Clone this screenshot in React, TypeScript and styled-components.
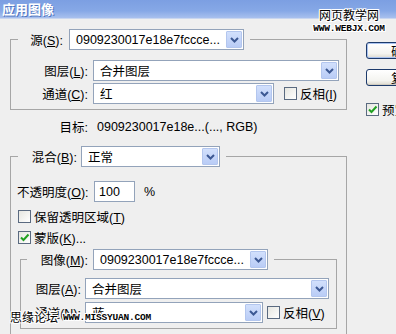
import React from 'react';
import styled, { createGlobalStyle } from 'styled-components';

const GlobalStyle = createGlobalStyle`
  body {
    margin: 0;
    background: #efefef;
  }
  * {
    box-sizing: border-box;
  }
`;

const Chevron = () => (
  <svg width="9" height="6" viewBox="0 0 9 6">
    <path d="M1 1 L4.5 4.5 L8 1" fill="none" stroke="#3c5893" strokeWidth="2" />
  </svg>
);

const Tick = () => (
  <svg width="11" height="11" viewBox="0 0 11 11">
    <path d="M2 5.5 L4.5 8 L9.5 2.5" fill="none" stroke="#21a121" strokeWidth="2" />
  </svg>
);

const Select = ({ w, value }: { w: number; value: string }) => (
  <SelectBox $w={w}>
    <SelectText>{value}</SelectText>
    <ArrowBtn>
      <Chevron />
    </ArrowBtn>
  </SelectBox>
);

const Check = ({ on, ml = 0, children }: { on?: boolean; ml?: number; children: React.ReactNode }) => (
  <CheckWrap $ml={ml}>
    <Box>{on && <Tick />}</Box>
    <span>{children}</span>
  </CheckWrap>
);

const App = () => {
  return (
    <Window>
      <GlobalStyle />
      <TitleBar>应用图像</TitleBar>
      <Body>
        <LeftCol>
          <Group $pt={10} $pb={5}>
            <Legend $ml={7}>
              <Label $w={45}>源(<U>S</U>):</Label>
              <Gap $w={6} />
              <Select w={175} value="0909230017e18e7fccce..." />
            </Legend>
            <Row>
              <Label $w={77}>图层(<U>L</U>):</Label>
              <Gap $w={5} />
              <Select w={246} value="合并图层" />
            </Row>
            <Row $mt={2}>
              <Label $w={77}>通道(<U>C</U>):</Label>
              <Gap $w={5} />
              <Select w={181} value="红" />
              <Check ml={10}>反相(<U>I</U>)</Check>
            </Row>
          </Group>

          <Target>
            <Label $w={78}>目标:</Label>
            <Gap $w={9} />
            <span>0909230017e18e...(..., RGB)</span>
          </Target>

          <Group $pt={14} $pb={20} $mt={12}>
            <Legend $ml={7}>
              <Label $w={59}>混合(<U>B</U>):</Label>
              <Gap $w={4} />
              <Select w={139} value="正常" />
            </Legend>
            <Row $pl={6}>
              <Label $w={77} $left>不透明度(<U>O</U>):</Label>
              <NumInput>100</NumInput>
              <Gap $w={9} />
              <span>%</span>
            </Row>
            <CheckRow $mt={4}>
              <Check>保留透明区域(<U>T</U>)</Check>
            </CheckRow>
            <CheckRow>
              <Check on>蒙版(<U>K</U>)...</Check>
            </CheckRow>
            <Group $pt={8} $pb={5} $mt={1} $mx={9}>
              <Legend $ml={6}>
                <Label $w={61}>图像(<U>M</U>):</Label>
                <Gap $w={5} />
                <Select w={175} value="0909230017e18e7fccce..." />
              </Legend>
              <Row>
                <Label $w={60}>图层(<U>A</U>):</Label>
                <Gap $w={4} />
                <Select w={244} value="合并图层" />
              </Row>
              <Row $mt={3}>
                <Label $w={60}>通道(<U>N</U>):</Label>
                <Gap $w={4} />
                <Select w={178} value="蓝" />
                <Check ml={4}>反相(<U>V</U>)</Check>
              </Row>
            </Group>
          </Group>
        </LeftCol>

        <RightCol>
          <Button $primary>确定</Button>
          <Button>复位</Button>
          <PreviewRow>
            <Check on>预览(<U>P</U>)</Check>
          </PreviewRow>
        </RightCol>
      </Body>

      <MarkTop>
        <MarkTitle>网页教学网</MarkTitle>
        <MarkUrl>WWW.WEBJX.COM</MarkUrl>
      </MarkTop>
      <MarkBottom>
        <MarkTitle>思缘论坛</MarkTitle>
        <MarkUrl>WWW.MISSYUAN.COM</MarkUrl>
      </MarkBottom>
    </Window>
  );
};

export default App;

const Window = styled.div`
  width: 396px;
  height: 334px;
  position: relative;
  overflow: hidden;
  background: #efefef;
  font-family: "Liberation Sans", "Noto Sans CJK SC", sans-serif;
  font-size: 12.5px;
  color: #000;
`;

const TitleBar = styled.div`
  height: 19px;
  padding-left: 2px;
  line-height: 18px;
  background: linear-gradient(#7c9fe2, #86a8e6 60%, #a8c0ee);
  border-bottom: 1px solid #c9d6ef;
  color: #fff;
  font-family: "Noto Sans CJK SC", sans-serif;
  font-weight: bold;
  font-size: 13px;
  text-shadow: 1px 1px 0 #5277bf;
`;

const Body = styled.div`
  display: flex;
  gap: 19px;
  padding: 10px 0 0 10px;
`;

const LeftCol = styled.div`
  flex: none;
  width: 337px;
  display: flex;
  flex-direction: column;
`;

const Group = styled.fieldset<{ $pt: number; $pb: number; $mt?: number; $mx?: number }>`
  margin: ${({ $mt }) => $mt || 0}px ${({ $mx }) => $mx || 0}px 0;
  padding: ${({ $pt }) => $pt}px 0 ${({ $pb }) => $pb}px;
  border: 1px solid #a6a6a6;
  min-width: 0;
  display: flex;
  flex-direction: column;
`;

const Legend = styled.legend<{ $ml: number }>`
  margin-left: ${({ $ml }) => $ml}px;
  padding: 0 6px 0 0;
  display: flex;
  align-items: center;
`;

const Row = styled.div<{ $mt?: number; $pl?: number }>`
  display: flex;
  align-items: center;
  height: 21px;
  margin-top: ${({ $mt }) => $mt || 0}px;
  padding-left: ${({ $pl }) => $pl || 0}px;
`;

const CheckRow = styled.div<{ $mt?: number }>`
  display: flex;
  align-items: center;
  height: 21px;
  margin-top: ${({ $mt }) => $mt || 0}px;
  padding-left: 7px;
`;

const Target = styled.div`
  display: flex;
  align-items: center;
  height: 15px;
  margin-top: 9px;
`;

const Label = styled.span<{ $w: number; $left?: boolean }>`
  flex: none;
  width: ${({ $w }) => $w}px;
  text-align: ${({ $left }) => ($left ? 'left' : 'right')};
  white-space: nowrap;
`;

const Gap = styled.span<{ $w: number }>`
  flex: none;
  width: ${({ $w }) => $w}px;
`;

const U = styled.span`
  text-decoration: underline;
`;

const SelectBox = styled.div<{ $w: number }>`
  flex: none;
  width: ${({ $w }) => $w}px;
  height: 21px;
  display: flex;
  align-items: center;
  background: #fff;
  border: 1px solid #93a3ba;
`;

const SelectText = styled.span`
  flex: 1;
  padding-left: 6px;
  white-space: nowrap;
  overflow: hidden;
`;

const ArrowBtn = styled.div`
  flex: none;
  width: 16px;
  height: 17px;
  margin-right: 1px;
  display: flex;
  align-items: center;
  justify-content: center;
  background: linear-gradient(#d2e0fc, #b9ccf6);
  border: 1px solid #b3c6ee;
  border-radius: 1px;
`;

const NumInput = styled.div`
  flex: none;
  width: 41px;
  height: 21px;
  padding-left: 4px;
  display: flex;
  align-items: center;
  background: #fff;
  border: 1px solid #93a3ba;
`;

const CheckWrap = styled.div<{ $ml: number }>`
  display: flex;
  align-items: center;
  gap: 3px;
  margin-left: ${({ $ml }) => $ml}px;
  white-space: nowrap;
`;

const Box = styled.span`
  flex: none;
  width: 13px;
  height: 13px;
  display: flex;
  align-items: center;
  justify-content: center;
  background: linear-gradient(135deg, #e6e6e0, #ffffff);
  border: 1px solid #5a6a80;
`;

const RightCol = styled.div`
  flex: none;
  width: 75px;
  padding-top: 13px;
  display: flex;
  flex-direction: column;
  gap: 10px;
`;

const Button = styled.div<{ $primary?: boolean }>`
  height: 17px;
  display: flex;
  align-items: center;
  justify-content: center;
  border: 1px solid #1c3a6b;
  border-radius: 3px;
  background: linear-gradient(#ffffff, #f4f4f0 70%, #dcd9ce);
  box-shadow: ${({ $primary }) => ($primary ? 'inset 0 0 0 1px #a9c2ef' : 'inset 0 -1px 0 #d0ccc0')};
`;

const PreviewRow = styled.div`
  margin-top: 6px;
  height: 15px;
  display: flex;
  align-items: center;
`;

const halo = `
  text-shadow: 1px 0 #fff, -1px 0 #fff, 0 1px #fff, 0 -1px #fff,
    1px 1px #fff, -1px -1px #fff, 1px -1px #fff, -1px 1px #fff;
`;

const MarkTop = styled.div`
  position: absolute;
  top: 8px;
  left: 313px;
  width: 72px;
  display: flex;
  flex-direction: column;
  align-items: center;
  gap: 2px;
`;

const MarkBottom = styled.div`
  position: absolute;
  top: 310px;
  left: 10px;
  display: flex;
  align-items: center;
  gap: 5px;
`;

const MarkTitle = styled.span`
  font-family: "Noto Sans CJK SC", sans-serif;
  font-size: 12px;
  line-height: 14px;
  color: #000;
  ${halo}
`;

const MarkUrl = styled.span`
  font-family: "Liberation Mono", monospace;
  font-weight: bold;
  font-size: 9.5px;
  line-height: 9px;
  letter-spacing: -0.2px;
  color: #000;
  ${halo}
`;
